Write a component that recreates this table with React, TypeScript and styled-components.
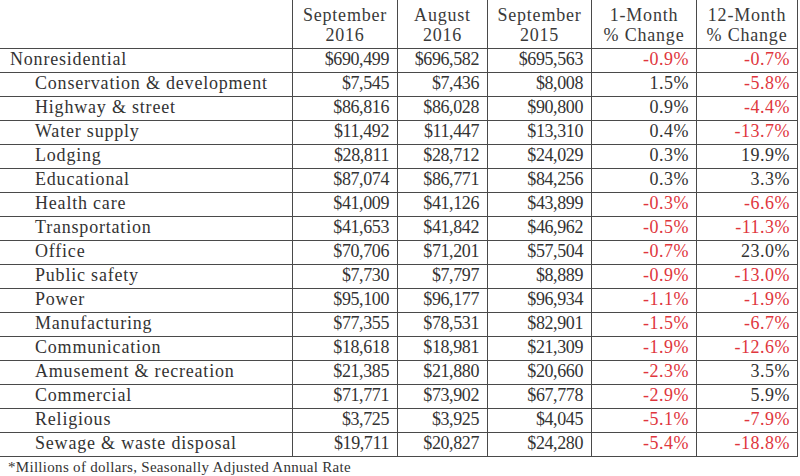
import React from "react";
import styled, { createGlobalStyle } from "styled-components";

const Global = createGlobalStyle`
  html, body {
    margin: 0;
    padding: 0;
    background: #ffffff;
  }
  body {
    font-family: "Liberation Serif", "DejaVu Serif", serif;
    color: #333333;
  }
`;

const COLS = "293px 105px 90px 104px 105px 101px";

const Page = styled.div`
  width: 800px;
  height: 476px;
  overflow: hidden;
  background: #fff;
`;

const Table = styled.div`
  display: flex;
  flex-direction: column;
  width: 798px;
`;

const Row = styled.div<{ $header?: boolean }>`
  display: grid;
  grid-template-columns: ${COLS};
  height: ${(p) => (p.$header ? "49px" : "24px")};
`;

const Cell = styled.div`
  box-sizing: border-box;
  border-right: 1px solid #4a4a4a;
  border-bottom: 1px solid #4a4a4a;
  font-size: 18px;
  letter-spacing: 0.8px;
  line-height: 20px;
  white-space: nowrap;
  overflow: hidden;
`;

const HeadCell = styled(Cell)`
  text-align: center;
  padding-top: 5px;
  color: #3a3a3a;
`;

const LabelCell = styled(Cell)<{ $indent?: boolean }>`
  padding-left: ${(p) => (p.$indent ? "35px" : "10px")};
  color: #333;
`;

const NumCell = styled(Cell)<{ $neg?: boolean; $money?: boolean }>`
  text-align: right;
  padding-right: ${(p) => (p.$money ? "8px" : "7px")};
  letter-spacing: ${(p) => (p.$money ? "-0.4px" : "0.5px")};
  color: ${(p) => (p.$neg ? "#e0363d" : "#333")};
`;

const Footnote = styled.div`
  font-size: 15px;
  letter-spacing: 0.3px;
  line-height: 18px;
  padding: 1px 0 0 8px;
  color: #333;
`;

type Item = {
  name: string;
  a: string;
  b: string;
  c: string;
  m1: string;
  m12: string;
  indent?: boolean;
};

const rows: Item[] = [
  { name: "Nonresidential", a: "$690,499", b: "$696,582", c: "$695,563", m1: "-0.9%", m12: "-0.7%" },
  { name: "Conservation & development", a: "$7,545", b: "$7,436", c: "$8,008", m1: "1.5%", m12: "-5.8%", indent: true },
  { name: "Highway & street", a: "$86,816", b: "$86,028", c: "$90,800", m1: "0.9%", m12: "-4.4%", indent: true },
  { name: "Water supply", a: "$11,492", b: "$11,447", c: "$13,310", m1: "0.4%", m12: "-13.7%", indent: true },
  { name: "Lodging", a: "$28,811", b: "$28,712", c: "$24,029", m1: "0.3%", m12: "19.9%", indent: true },
  { name: "Educational", a: "$87,074", b: "$86,771", c: "$84,256", m1: "0.3%", m12: "3.3%", indent: true },
  { name: "Health care", a: "$41,009", b: "$41,126", c: "$43,899", m1: "-0.3%", m12: "-6.6%", indent: true },
  { name: "Transportation", a: "$41,653", b: "$41,842", c: "$46,962", m1: "-0.5%", m12: "-11.3%", indent: true },
  { name: "Office", a: "$70,706", b: "$71,201", c: "$57,504", m1: "-0.7%", m12: "23.0%", indent: true },
  { name: "Public safety", a: "$7,730", b: "$7,797", c: "$8,889", m1: "-0.9%", m12: "-13.0%", indent: true },
  { name: "Power", a: "$95,100", b: "$96,177", c: "$96,934", m1: "-1.1%", m12: "-1.9%", indent: true },
  { name: "Manufacturing", a: "$77,355", b: "$78,531", c: "$82,901", m1: "-1.5%", m12: "-6.7%", indent: true },
  { name: "Communication", a: "$18,618", b: "$18,981", c: "$21,309", m1: "-1.9%", m12: "-12.6%", indent: true },
  { name: "Amusement & recreation", a: "$21,385", b: "$21,880", c: "$20,660", m1: "-2.3%", m12: "3.5%", indent: true },
  { name: "Commercial", a: "$71,771", b: "$73,902", c: "$67,778", m1: "-2.9%", m12: "5.9%", indent: true },
  { name: "Religious", a: "$3,725", b: "$3,925", c: "$4,045", m1: "-5.1%", m12: "-7.9%", indent: true },
  { name: "Sewage & waste disposal", a: "$19,711", b: "$20,827", c: "$24,280", m1: "-5.4%", m12: "-18.8%", indent: true },
];

const headers: [string, string][] = [
  ["September", "2016"],
  ["August", "2016"],
  ["September", "2015"],
  ["1-Month", "% Change"],
  ["12-Month", "% Change"],
];

const isNeg = (v: string) => v.startsWith("-");

export default function App() {
  return (
    <Page>
      <Global />
      <Table>
        <Row $header>
          <HeadCell />
          {headers.map(([l1, l2], i) => (
            <HeadCell key={i}>
              {l1}
              <br />
              {l2}
            </HeadCell>
          ))}
        </Row>
        {rows.map((r) => (
          <Row key={r.name}>
            <LabelCell $indent={r.indent}>{r.name}</LabelCell>
            <NumCell $money>{r.a}</NumCell>
            <NumCell $money>{r.b}</NumCell>
            <NumCell $money>{r.c}</NumCell>
            <NumCell $neg={isNeg(r.m1)}>{r.m1}</NumCell>
            <NumCell $neg={isNeg(r.m12)}>{r.m12}</NumCell>
          </Row>
        ))}
      </Table>
      <Footnote>*Millions of dollars, Seasonally Adjusted Annual Rate</Footnote>
    </Page>
  );
}
